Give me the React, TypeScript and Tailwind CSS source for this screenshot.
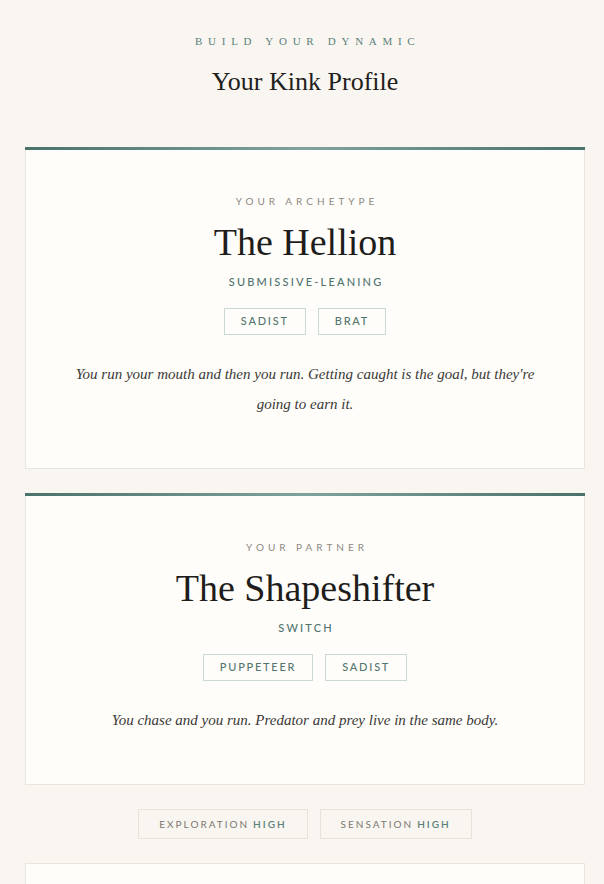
const serif = "font-['Liberation_Serif','Times_New_Roman',serif]";
const sans = "font-['Lato','Liberation_Sans',sans-serif]";

interface ProfileCardProps {
  label: string;
  name: string;
  leaning: string;
  tags: string[];
  blurb: string;
}

function ProfileCard({ label, name, leaning, tags, blurb }: ProfileCardProps) {
  return (
    <div className="relative border border-[#e9e5dd] bg-[#fefdfa] px-12 pt-[47px] pb-[49px] text-center">
      <div className="absolute -left-px -right-px -top-px h-[3px] bg-[linear-gradient(90deg,#4b716b,#7fa29c_50%,#4b716b)]" />
      <div className={`${sans} pl-[0.4em] text-[10px] leading-[12px] tracking-[0.4em] text-[#8d8880]`}>{label}</div>
      <h2 className={`${serif} mt-[13px] text-[38px] leading-[44px] text-[#1e1d1b]`}>{name}</h2>
      <div className={`${sans} mt-[11px] pl-[0.2em] text-[11px] leading-[14px] font-medium tracking-[0.2em] text-[#4f736e]`}>
        {leaning}
      </div>
      <div className="mt-[19px] flex justify-center gap-3">
        {tags.map((t) => (
          <span
            key={t}
            className={`${sans} flex h-[27px] items-center border border-[#c9d8d5] px-4 text-[11px] font-medium tracking-[0.16em] text-[#55766f]`}
          >
            {t}
          </span>
        ))}
      </div>
      <p className={`${serif} mt-[24px] text-[15px] leading-[30px] italic text-[#3a3936]`}>{blurb}</p>
    </div>
  );
}

function ScorePill({ label, level }: { label: string; level: string }) {
  return (
    <span
      className={`${sans} flex h-[30px] items-center border border-[#e8e4dc] bg-[#f9f6f1] px-5 text-[10px] tracking-[0.2em] text-[#7b766f]`}
    >
      {label}
      <span className="ml-[0.4em] font-semibold text-[#5b7f79]">{level}</span>
    </span>
  );
}

export default function App() {
  return (
    <div className="min-h-screen bg-[#f9f6f1] pb-10">
      <div className="ml-[25px] w-[560px] pt-[35px]">
        <div className="text-center">
          <div className={`${serif} pl-[0.5em] text-[11px] leading-[12px] tracking-[0.52em] text-[#5b807a]`}>
            BUILD YOUR DYNAMIC
          </div>
          <h1 className={`${serif} mt-[19px] text-[26px] leading-[32px] text-[#222120]`}>Your Kink Profile</h1>
        </div>

        <div className="mt-[49px] flex flex-col gap-6">
          <ProfileCard
            label="YOUR ARCHETYPE"
            name="The Hellion"
            leaning="SUBMISSIVE-LEANING"
            tags={["SADIST", "BRAT"]}
            blurb="You run your mouth and then you run. Getting caught is the goal, but they're going to earn it."
          />
          <ProfileCard
            label="YOUR PARTNER"
            name="The Shapeshifter"
            leaning="SWITCH"
            tags={["PUPPETEER", "SADIST"]}
            blurb="You chase and you run. Predator and prey live in the same body."
          />

          <div className="flex justify-center gap-3">
            <ScorePill label="EXPLORATION" level="HIGH" />
            <ScorePill label="SENSATION" level="HIGH" />
          </div>

          <div className="h-[200px] border border-[#e9e5dd] bg-[#fefdfa]" />
        </div>
      </div>
    </div>
  );
}
